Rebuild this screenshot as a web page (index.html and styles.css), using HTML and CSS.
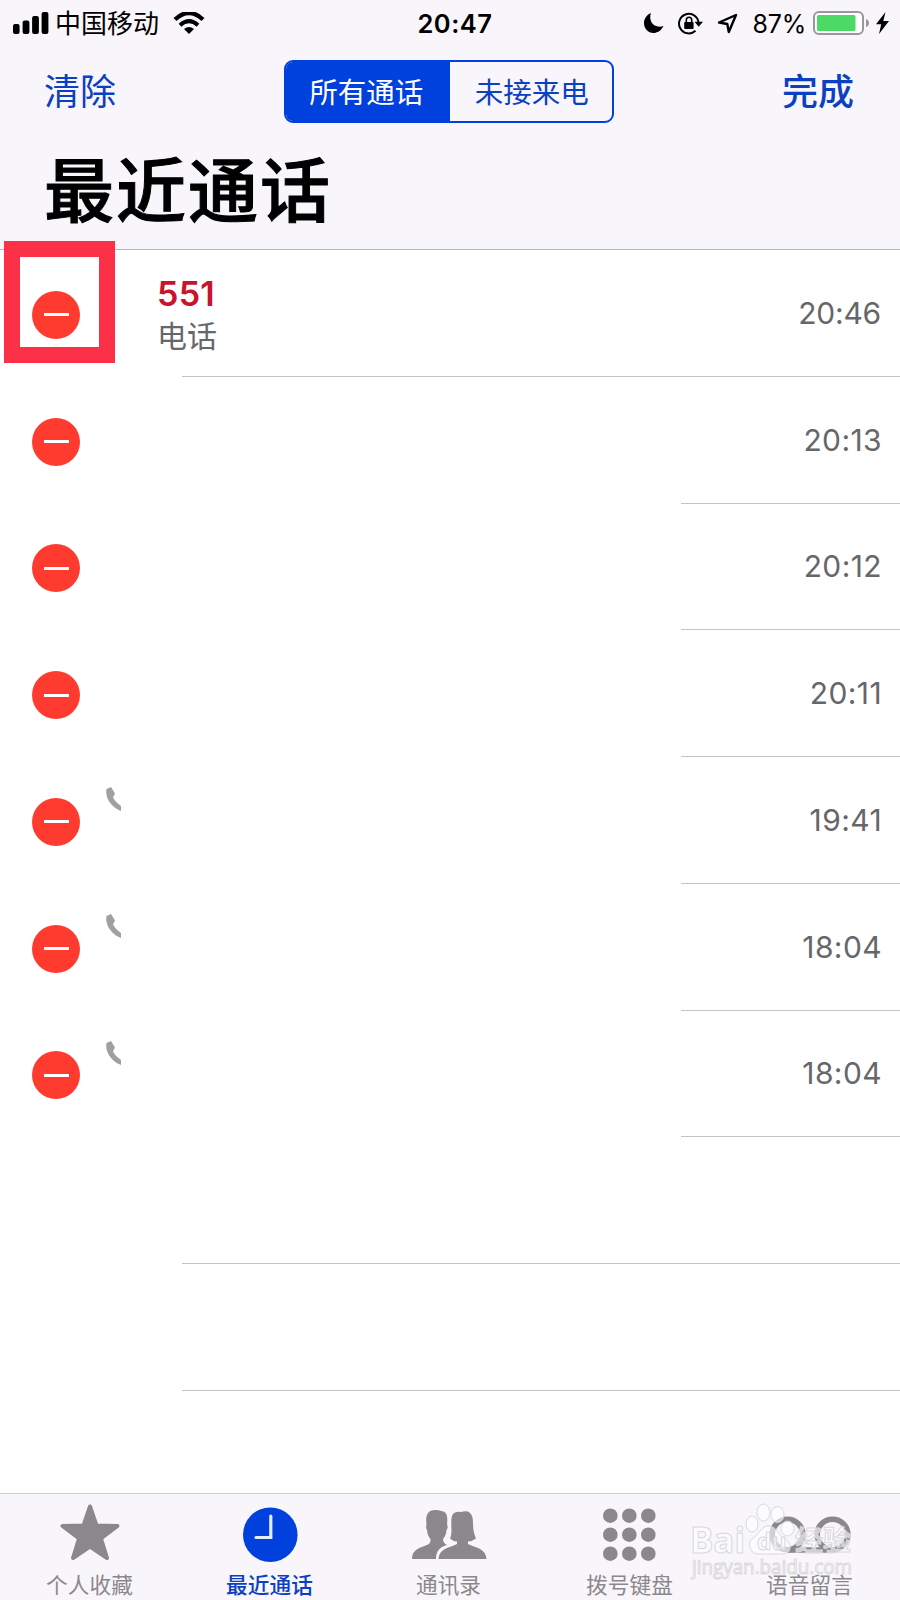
FILE: index.html
```html
<!DOCTYPE html>
<html lang="zh-CN">
<head>
  <meta charset="UTF-8" />
  <title>最近通话</title>
  <link rel="stylesheet" href="styles.css">
</head>
<body>

  <header>
    <!-- Barra de estado -->
    <div class="status">
      <div class="status-left">
        <svg width="36" height="22" viewBox="0 0 36 22">
          <rect x="0" y="12" width="6.6" height="10" rx="2"/>
          <rect x="9.6" y="8.5" width="6.8" height="13.5" rx="2"/>
          <rect x="19.1" y="4" width="6.8" height="18" rx="2"/>
          <rect x="28.6" y="0" width="6.8" height="22" rx="2"/>
        </svg>
        <span class="carrier">中国移动</span>
        <svg class="wifi" width="32" height="22" viewBox="0 0 32 22">
          <path d="M2 7.500Q16-5.500 30 7.500" fill="none" stroke="#000" stroke-width="4.4"/>
          <path d="M7 13.200Q16 5.200 25 13.200" fill="none" stroke="#000" stroke-width="4"/>
          <path d="M11 17Q16 13 21 17L16 22Z"/>
        </svg>
      </div>
      <span class="clock">20:47</span>
      <div class="status-right">
        <svg width="20" height="20" viewBox="0 0 20 20"><path d="M7 0C4 8 10 16 19.500 13C17 18 13 20 9.500 20C4 20 0 15.500 0 10C0 5.500 3 1.500 7 0Z"/></svg>
        <svg class="lock" width="25" height="23" viewBox="0 0 25 23">
          <path d="M20.500 10A9.800 9.800 0 1 0 17.500 18.800" fill="none" stroke="#000" stroke-width="2"/>
          <path d="M16.500 9.800H25L20.700 14.800Z"/>
          <rect x="6.2" y="10" width="9.4" height="7" rx="1"/>
          <path d="M8.300 11V8a2.700 2.700 0 0 1 5.400 0v3" fill="none" stroke="#000" stroke-width="1.6"/>
        </svg>
        <svg class="arrow" width="21" height="21" viewBox="0 0 21 21"><path d="M2 9.500L19 2L11.800 19L10.300 11Z" fill="none" stroke="#000" stroke-width="2.4" stroke-linejoin="round"/></svg>
        <span class="percent">87%</span>
        <svg class="battery" width="56" height="24" viewBox="0 0 56 24">
          <rect x="1" y="1" width="49" height="22" rx="5" fill="#fff" stroke="#98989b" stroke-width="2"/>
          <rect x="4" y="4" width="38.5" height="16" rx="1.5" fill="#4cd964"/>
          <path d="M53 8q3 1 3 4t-3 4z" fill="#98989b"/>
        </svg>
        <svg width="13" height="22" viewBox="0 0 13 22"><path d="M9.500 0L0 12.300H5.200L3 22L13 9H7.300Z"/></svg>
      </div>
    </div>

    <div class="nav">
      <a class="clear">清除</a>
      <div class="segmented">
        <span class="active">所有通话</span>
        <span>未接来电</span>
      </div>
      <a class="done">完成</a>
    </div>

    <h1>最近通话</h1>
  </header>

  <!-- Lista de llamadas -->
  <ul class="calls">
    <li class="wide">
      <i class="minus"></i>
      <div class="caller"><b>551</b><small>电话</small></div>
      <time class="first">20:46</time>
      <div class="marker"></div>
    </li>
    <li><i class="minus"></i><time>20:13</time></li>
    <li><i class="minus"></i><time>20:12</time></li>
    <li><i class="minus"></i><time>20:11</time></li>
    <li>
      <i class="minus"></i>
      <svg class="phone" viewBox="0 0 15 24"><path d="M0.500 2L5 0L9 6.500L7 10.500C9 14 11.500 16.500 15 19V24C7 21-1.500 12 0.500 2Z"/></svg>
      <time>19:41</time>
    </li>
    <li>
      <i class="minus"></i>
      <svg class="phone" viewBox="0 0 15 24"><path d="M0.500 2L5 0L9 6.500L7 10.500C9 14 11.500 16.500 15 19V24C7 21-1.500 12 0.500 2Z"/></svg>
      <time>18:04</time>
    </li>
    <li>
      <i class="minus"></i>
      <svg class="phone" viewBox="0 0 15 24"><path d="M0.500 2L5 0L9 6.500L7 10.500C9 14 11.500 16.500 15 19V24C7 21-1.500 12 0.500 2Z"/></svg>
      <time>18:04</time>
    </li>
    <li class="wide"></li>
    <li class="wide"></li>
  </ul>

  <!-- Barra inferior -->
  <footer>
    <div class="tab">
      <svg viewBox="0 0 90 64"><path d="M45 6.500L51.500 25.500L72.500 26L56 38.500L62 58L45 46.500L28 58L34 38.500L17.500 26L38.500 25.500Z" stroke="#8b888c" stroke-width="4" stroke-linejoin="round"/></svg>
      <span>个人收藏</span>
    </div>
    <div class="tab selected">
      <svg viewBox="0 0 90 64"><circle cx="45.3" cy="34.7" r="27.3"/><path d="M45.800 16V37.500H31" fill="none" stroke="#e6ecff" stroke-width="3.2" stroke-linecap="round"/></svg>
      <span>最近通话</span>
    </div>
    <div class="tab contacts">
      <svg viewBox="0 0 90 64">
        <path d="M7 59C7 49 15 48 24 44Q26 42 25.500 39Q22.500 36 22 30Q20.500 28 21.500 24C20 14 24 10 30 10Q33 9.500 36 11C42 11 43 17 42 24Q43.500 28 41.500 30Q41 36 38 39Q38 43 42 45C34 47 31 52 31 59Z"/>
        <path d="M33.500 59C34 49 43 48 52 44V41.500Q48 41.500 45 38.500C48 33 45 23 47 16Q49 11 56 12C66 9 68 16 68 23C68 30 69 34 71 38.500Q67 41.500 63 41.500V44C72 48 81 49 81.500 59Z"/>
      </svg>
      <span>通讯录</span>
    </div>
    <div class="tab">
      <svg viewBox="0 0 90 64">
        <circle cx="25.3" cy="15.7" r="7.3"/><circle cx="44.3" cy="15.7" r="7.3"/><circle cx="63.3" cy="15.7" r="7.3"/>
        <circle cx="25.3" cy="34.7" r="7.3"/><circle cx="44.3" cy="34.7" r="7.3"/><circle cx="63.3" cy="34.7" r="7.3"/>
        <circle cx="25.3" cy="53.7" r="7.3"/><circle cx="44.3" cy="53.7" r="7.3"/><circle cx="63.3" cy="53.7" r="7.3"/>
      </svg>
      <span>拨号键盘</span>
    </div>
    <div class="tab">
      <svg viewBox="0 0 90 64"><g fill="none" stroke="#8b888c" stroke-width="5.6"><circle cx="22.5" cy="34.5" r="15.3"/><circle cx="67.5" cy="34.5" r="15.3"/><path d="M22 50H68"/></g></svg>
      <span>语音留言</span>
    </div>

    <!-- Marca de agua -->
    <svg class="watermark" viewBox="0 0 180 84">
      <g class="logo">
        <text x="9" y="56" textLength="55" lengthAdjust="spacingAndGlyphs">Bai</text>
        <ellipse cx="71" cy="27" rx="6" ry="8"/>
        <ellipse cx="82.5" cy="15.5" rx="6.5" ry="8.5"/>
        <ellipse cx="96.500" cy="17.500" rx="6.5" ry="8"/>
        <ellipse cx="106.500" cy="31.500" rx="6.5" ry="7.5"/>
        <path d="M87 29C80 29 77 39 71 42C66 46 69 57 77 57H102C111 57 111 46 104 42C97 38 96 29 87 29Z"/>
        <text class="du" x="76" y="53">du</text>
        <text class="jy" x="114" y="54">经验</text>
      </g>
      <text class="url" x="11" y="77" textLength="160" lengthAdjust="spacingAndGlyphs">jingyan.baidu.com</text>
    </svg>
  </footer>

</body>
</html>
```
FILE: styles.css
```css
* {
  box-sizing: border-box;
}
body {
  margin: 0;
  height: 1600px;
  overflow: hidden;
  display: flex;
  flex-direction: column;
  background: #fff;
  font-family: Inter, "Noto Sans CJK SC", sans-serif;
}
svg {
  display: block;
  flex: none;
}
header {
  height: 250px;
  background: #f8f6fa;
  border-bottom: 1px solid #b9b9bc;
}

/* status bar */
.status {
  height: 44px;
  display: grid;
  grid-template-columns: 1fr auto 1fr;
  align-items: center;
  padding: 0 11px 0 13px;
}
.status-left,
.status-right {
  display: flex;
  align-items: center;
}
.status-right {
  justify-content: flex-end;
}
.carrier {
  margin: 2px 0 0 6px;
  font-size: 26px;
  line-height: 44px;
}
.wifi {
  margin-left: 14px;
}
.clock {
  margin: 1px -4px 0 4px;
  font-size: 25.5px;
  font-weight: 600;
  letter-spacing: 0.5px;
}
.lock {
  margin-left: 14px;
}
.arrow {
  margin-left: 14px;
}
.percent {
  margin: 1px 0 0 14px;
  font-size: 25px;
  letter-spacing: -0.2px;
}
.battery {
  margin: 0 7px 0 7px;
}

/* navigation */
.nav {
  height: 95px;
  display: flex;
  justify-content: space-between;
  align-items: center;
  padding: 0 46px 0 44px;
  color: #0b40c0;
  font-size: 36px;
}
.clear,
.done {
  margin-top: -5px;
}
.done {
  font-weight: 500;
}
.segmented {
  width: 330px;
  height: 63px;
  display: flex;
  border: 2px solid #0040dd;
  border-radius: 9px;
  overflow: hidden;
  font-size: 28.5px;
  line-height: 61px;
  text-align: center;
}
.segmented span {
  flex: 1;
  padding-left: 2px;
}
.segmented .active {
  padding: 0 3px 0 0;
  background: #0040dd;
  color: #fff;
}
h1 {
  margin: 0 0 0 44px;
  font-size: 70px;
  line-height: 105px;
  letter-spacing: 2px;
  font-weight: 500;
  -webkit-text-stroke: 1px #000;
}

/* calls */
.calls {
  flex: 1;
  margin: 0;
  padding: 0;
  list-style: none;
}
.calls li {
  position: relative;
  height: 126.75px;
  display: flex;
  align-items: center;
  padding: 0 18px 0 32px;
  background: linear-gradient(#c4c4c6, #c4c4c6) 681px 100% / 900px 1px no-repeat;
}
.calls .wide {
  background-position-x: 182px;
}
.minus {
  width: 48px;
  height: 48px;
  margin-top: 3px;
  display: flex;
  align-items: center;
  justify-content: center;
  border-radius: 50%;
  background: #ff3b30;
}
.minus::before {
  content: "";
  width: 25px;
  height: 3px;
  background: #fff;
}
.caller {
  margin: 7px 0 0 77px;
}
.caller b {
  display: block;
  color: #c8142d;
  font-size: 34px;
  font-weight: 600;
  letter-spacing: 0.3px;
  line-height: 39px;
}
.caller small {
  display: block;
  color: #67666a;
  font-size: 30px;
  line-height: 46px;
}
time {
  margin-left: auto;
  margin-top: -1px;
  color: #67666a;
  font-size: 30px;
  letter-spacing: 0.4px;
}
.first {
  margin-right: 1px;
  letter-spacing: -0.2px;
}
.phone {
  width: 15px;
  height: 24px;
  margin: -42px 0 0 26px;
  fill: #a0a0a0;
}
.marker {
  position: absolute;
  left: 4px;
  top: -9px;
  width: 111px;
  height: 122px;
  border: 16px solid #fc3148;
}

/* tab bar */
footer {
  position: relative;
  height: 107px;
  display: flex;
  background: #f8f6fa;
  border-top: 1px solid #cfcfd1;
}
.tab {
  flex: 1;
  display: flex;
  flex-direction: column;
  align-items: center;
  padding-top: 6px;
  color: #8b888c;
  fill: #8b888c;
  font-size: 21.7px;
  line-height: 42px;
}
.tab svg {
  width: 90px;
  height: 64px;
}
.tab span {
  margin-right: 1px;
}
.contacts span {
  margin-right: 3px;
}
.selected {
  color: #0b40c0;
  fill: #0040dd;
  font-weight: 500;
}
.watermark {
  position: absolute;
  left: 681px;
  top: 3px;
  width: 180px;
  height: 84px;
  font-family: "Open Sans", "Noto Sans CJK SC", sans-serif;
  fill: rgba(255, 255, 255, 0.6);
  stroke: #d9d8db;
  stroke-width: 1px;
}
.logo {
  font-size: 35px;
  font-weight: 700;
}
.logo .du {
  font-size: 23px;
}
.logo .jy {
  font-size: 28px;
}
.url {
  font-size: 20px;
}
```
